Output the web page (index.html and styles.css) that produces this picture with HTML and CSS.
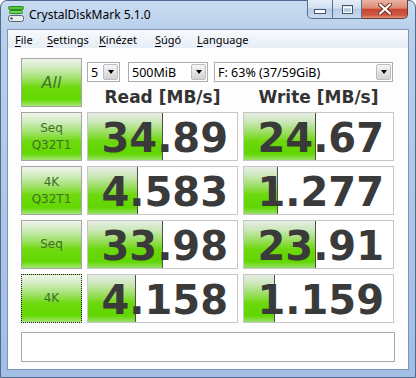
FILE: index.html
```html
<!DOCTYPE html>
<html lang="en">
<head>
  <meta charset="UTF-8">
  <title>CrystalDiskMark 5.1.0</title>
  <link rel="stylesheet" href="styles.css">
</head>
<body>

<div class="window">
  <div class="titlebar">
    <svg class="app-icon" width="16" height="17" viewBox="0 0 16 17">
      <rect x="0.5" y="0.5" width="15" height="3" rx="1" fill="#52c93c" stroke="#2f8a25"/>
      <rect x="1.5" y="4.5" width="13" height="3" rx="1" fill="#6cd64f" stroke="#2f8a25"/>
      <rect x="0.5" y="9.5" width="15" height="6" rx="2" fill="#e8ecef" stroke="#5b646c"/>
      <circle cx="3.5" cy="12.5" r="1.2" fill="#4a545c"/>
    </svg>
    <span class="title">CrystalDiskMark 5.1.0</span>
    <div class="caps">
      <div class="cap min">
        <svg width="12" height="5"><rect x="0.5" y="0.5" width="11" height="4" fill="#fff" stroke="#3f5673"/></svg>
      </div>
      <div class="cap max">
        <svg width="11" height="9"><rect x="0.5" y="0.5" width="10" height="8" fill="none" stroke="#3f5673"/><rect x="1.5" y="2.5" width="8" height="5" fill="none" stroke="#fff"/></svg>
      </div>
      <div class="cap close">
        <svg width="14" height="12" viewBox="0 0 14 12">
          <path d="M2 1.5 L12 10.5 M12 1.5 L2 10.5" stroke="#6b2a22" stroke-width="4" stroke-linecap="round"/>
          <path d="M2 1.5 L12 10.5 M12 1.5 L2 10.5" stroke="#fff" stroke-width="2.2" stroke-linecap="round"/>
        </svg>
      </div>
    </div>
  </div>

  <div class="frame-inner">
    <div class="menubar">
      <span class="m-file"><u>F</u>ile</span>
      <span class="m-settings"><u>S</u>ettings</span>
      <span class="m-look"><u>K</u>inézet</span>
      <span class="m-help"><u>S</u>úgó</span>
      <span><u>L</u>anguage</span>
    </div>

    <div class="client">
      <div class="grid">
        <div class="btn all">All</div>
        <div class="top-panel">
          <div class="combos">
            <div class="combo c-count"><span>5</span><i class="arrow"></i></div>
            <div class="combo c-size"><span>500MiB</span><i class="arrow"></i></div>
            <div class="combo c-drive"><span>F: 63% (37/59GiB)</span><i class="arrow"></i></div>
          </div>
          <div class="heads">
            <div>Read [MB/s]</div>
            <div>Write [MB/s]</div>
          </div>
        </div>

        <div class="btn">Seq<br>Q32T1</div>
        <div class="val"><div class="bar" style="width:74px"></div><span class="num">34.89</span></div>
        <div class="val"><div class="bar" style="width:71px"></div><span class="num">24.67</span></div>

        <div class="btn">4K<br>Q32T1</div>
        <div class="val"><div class="bar" style="width:49px"></div><span class="num">4.583</span></div>
        <div class="val"><div class="bar" style="width:33px"></div><span class="num">1.277</span></div>

        <div class="btn">Seq</div>
        <div class="val"><div class="bar" style="width:74px"></div><span class="num">33.98</span></div>
        <div class="val"><div class="bar" style="width:71px"></div><span class="num">23.91</span></div>

        <div class="btn focus">4K</div>
        <div class="val"><div class="bar" style="width:47px"></div><span class="num">4.158</span></div>
        <div class="val"><div class="bar" style="width:30px"></div><span class="num">1.159</span></div>
      </div>
      <div class="comment"></div>
    </div>
  </div>
</div>

</body>
</html>
```

FILE: styles.css
```css
body {
  margin: 0;
  font-family: "Noto Sans", sans-serif;
  background: #fff;
}

.window {
  box-sizing: border-box;
  width: 416px;
  height: 378px;
  border: 1px solid #4f6a8e;
  border-radius: 7px 7px 0 0;
  background: linear-gradient(#c8dbf0, #b9d0eb 30px, #abc6e6 60%, #a2bee2);
  padding: 0 6px 7px;
  display: flex;
  flex-direction: column;
}

.titlebar {
  height: 28px;
  display: flex;
  align-items: flex-start;
}

.app-icon {
  margin: 5px 0 0 1px;
}

.title {
  margin: 5px 0 0 5px;
  font-size: 12px;
  color: #000;
}

/* caption buttons */
.caps {
  margin: -1px 1px 0 auto;
  display: flex;
}

.cap {
  box-sizing: border-box;
  height: 19px;
  border: 1px solid #5a6f90;
  border-top: none;
  background: linear-gradient(#e6eef9, #d0dff0 45%, #b7cbe4 50%, #c9daef);
  display: flex;
  align-items: center;
  justify-content: center;
}

.cap.min {
  width: 26px;
  border-radius: 0 0 0 5px;
  padding-top: 5px;
}

.cap.max {
  width: 29px;
  border-left: none;
}

.cap.close {
  width: 46px;
  border-left: none;
  border-color: #6e3a33;
  border-radius: 0 0 5px 0;
  background: linear-gradient(#eab3a3, #dc8a76 45%, #c8462f 52%, #cf5a40 85%, #e19a84);
}

.frame-inner {
  flex: 1;
  border: 1px solid #7b96bb;
  display: flex;
  flex-direction: column;
  background: #fff;
}

.menubar {
  height: 18px;
  background: linear-gradient(#f8fafd, #e7edf6);
  display: flex;
  align-items: center;
  padding-left: 7px;
  font-family: "Noto Sans", sans-serif;
  font-size: 11px;
  color: #000;
}

.menubar u {
  text-decoration-thickness: 1px;
  text-underline-offset: 2px;
}

.m-file { width: 32px; }
.m-settings { width: 52px; }
.m-look { width: 56px; }
.m-help { width: 42px; }

.client {
  flex: 1;
  padding: 10px 13px 7px;
  background: #fdfdfd;
}

.grid {
  display: grid;
  grid-template-columns: 61px 151px 151px;
  grid-auto-rows: 49px;
  gap: 5px;
}

.btn {
  box-sizing: border-box;
  border: 1px solid #a6a6a6;
  background: linear-gradient(#eef5ea 0%, #d2ecc2 18%, #9ee168 42%, #6fda0e 60%, #62d800 86%, #a3e675 100%);
  display: flex;
  align-items: center;
  justify-content: center;
  text-align: center;
  font-family: "DejaVu Sans", sans-serif;
  font-size: 12px;
  line-height: 17px;
  color: #3f6f2a;
}

.btn.all {
  font-size: 16px;
  font-style: italic;
  color: #437330;
}

.btn.focus {
  border: 1px dotted #1a1a1a;
}

.top-panel {
  grid-column: 2 / 4;
  display: flex;
  flex-direction: column;
}

.combos {
  display: flex;
  margin-top: 4px;
  height: 20px;
}

.combo {
  box-sizing: border-box;
  height: 20px;
  border: 1px solid #a9acb2;
  background: #fff;
  display: flex;
  align-items: center;
  justify-content: space-between;
  font-size: 12.5px;
  color: #000;
}

.combo span {
  padding-left: 3px;
}

.c-count { width: 33px; margin-right: 8px; }
.c-size { width: 80px; margin-right: 6px; }
.c-drive { width: 179px; }

.arrow {
  box-sizing: border-box;
  width: 15px;
  height: 16px;
  margin-right: 1px;
  border: 1px solid #b9bcc0;
  border-radius: 2px;
  background: linear-gradient(#f6f6f6, #e2e2e2 50%, #d3d3d3);
  display: flex;
  align-items: center;
  justify-content: center;
}

.arrow::after {
  content: "";
  border-left: 3.5px solid transparent;
  border-right: 3.5px solid transparent;
  border-top: 4px solid #000;
}

.heads {
  display: flex;
  gap: 5px;
  margin-top: 6px;
}

.heads div {
  width: 151px;
  text-align: center;
  font-family: "DejaVu Sans", sans-serif;
  font-weight: bold;
  font-size: 17px;
  line-height: 18px;
  color: #333;
}

.val {
  box-sizing: border-box;
  position: relative;
  border: 1px solid #c6c6c6;
  background: #fff;
  text-align: right;
  padding: 3px 9px 0 0;
  font-family: "DejaVu Sans", sans-serif;
  font-weight: bold;
  font-size: 40px;
  line-height: 44px;
  color: #3a3a3a;
}

.val .bar {
  position: absolute;
  left: 0;
  top: 0;
  bottom: 0;
  border-right: 1px solid #4b4f48;
  background: linear-gradient(#e6ede3 0%, #cde8bc 18%, #99de5f 42%, #6cd80c 60%, #60d600 86%, #98e168 100%);
}

.val .num {
  position: relative;
}

.comment {
  box-sizing: border-box;
  margin-top: 9px;
  height: 30px;
  border: 1px solid #a9a9a9;
  background: #fff;
}
```
